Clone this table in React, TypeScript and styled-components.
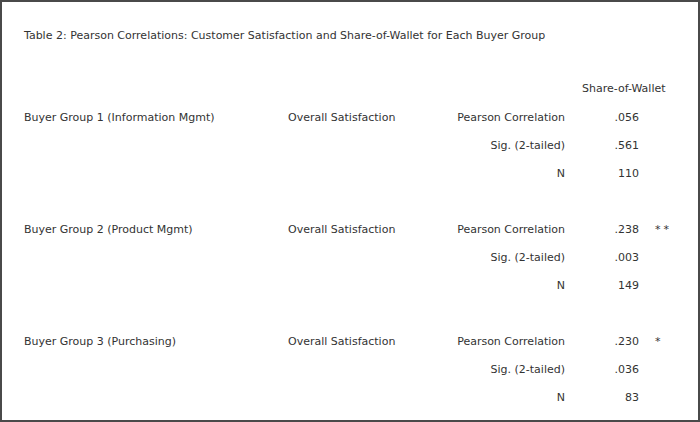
import React from "react";
import styled, { createGlobalStyle } from "styled-components";

const Global = createGlobalStyle`
  html, body { margin: 0; padding: 0; background: #fff; }
  body { font-family: "DejaVu Sans", "Liberation Sans", sans-serif; }
`;

const Frame = styled.div`
  box-sizing: border-box;
  width: 700px;
  height: 422px;
  border: 2px solid #4a4a4a;
  background: #fff;
  padding: 0 0 0 22px;
  color: #333;
  font-size: 11px;
`;

const Title = styled.div`
  box-sizing: border-box;
  height: 72px;
  padding-top: 27px;
  line-height: 14px;
  white-space: nowrap;
`;

const Table = styled.div`
  display: grid;
  grid-template-columns: 264px 150px 127px 74px 1fr;
  grid-template-rows: 29px;
  grid-auto-rows: 28px;
  align-items: center;
`;

const Cell = styled.div<{ $align?: "left" | "right"; $pad?: number }>`
  text-align: ${(p) => p.$align ?? "left"};
  padding-left: ${(p) => p.$pad ?? 0}px;
  white-space: nowrap;
`;

const Stars = styled.div`
  padding-left: 16px;
  letter-spacing: 3px;
  white-space: nowrap;
`;

const Header = styled.div`
  grid-column: 4 / 6;
  padding-left: 17px;
  white-space: nowrap;
`;

const Spacer = styled.div`
  grid-column: 1 / 6;
`;

type Group = { name: string; r: string; sig: string; n: string; star: string };

const groups: Group[] = [
  { name: "Buyer Group 1 (Information Mgmt)", r: ".056", sig: ".561", n: "110", star: "" },
  { name: "Buyer Group 2 (Product Mgmt)", r: ".238", sig: ".003", n: "149", star: "**" },
  { name: "Buyer Group 3 (Purchasing)", r: ".230", sig: ".036", n: "83", star: "*" },
];

export default function App() {
  return (
    <>
      <Global />
      <Frame>
        <Title>Table 2: Pearson Correlations: Customer Satisfaction and Share-of-Wallet for Each Buyer Group</Title>
        <Table>
          <Header>Share-of-Wallet</Header>
          {groups.map((g, i) => (
            <React.Fragment key={g.name}>
              <Cell>{g.name}</Cell>
              <Cell>Overall Satisfaction</Cell>
              <Cell $align="right">Pearson Correlation</Cell>
              <Cell $align="right">{g.r}</Cell>
              <Stars>{g.star}</Stars>
              <Cell />
              <Cell />
              <Cell $align="right">Sig. (2-tailed)</Cell>
              <Cell $align="right">{g.sig}</Cell>
              <Cell />
              <Cell />
              <Cell />
              <Cell $align="right">N</Cell>
              <Cell $align="right">{g.n}</Cell>
              <Cell />
              {i < groups.length - 1 && <Spacer />}
            </React.Fragment>
          ))}
        </Table>
      </Frame>
    </>
  );
}
